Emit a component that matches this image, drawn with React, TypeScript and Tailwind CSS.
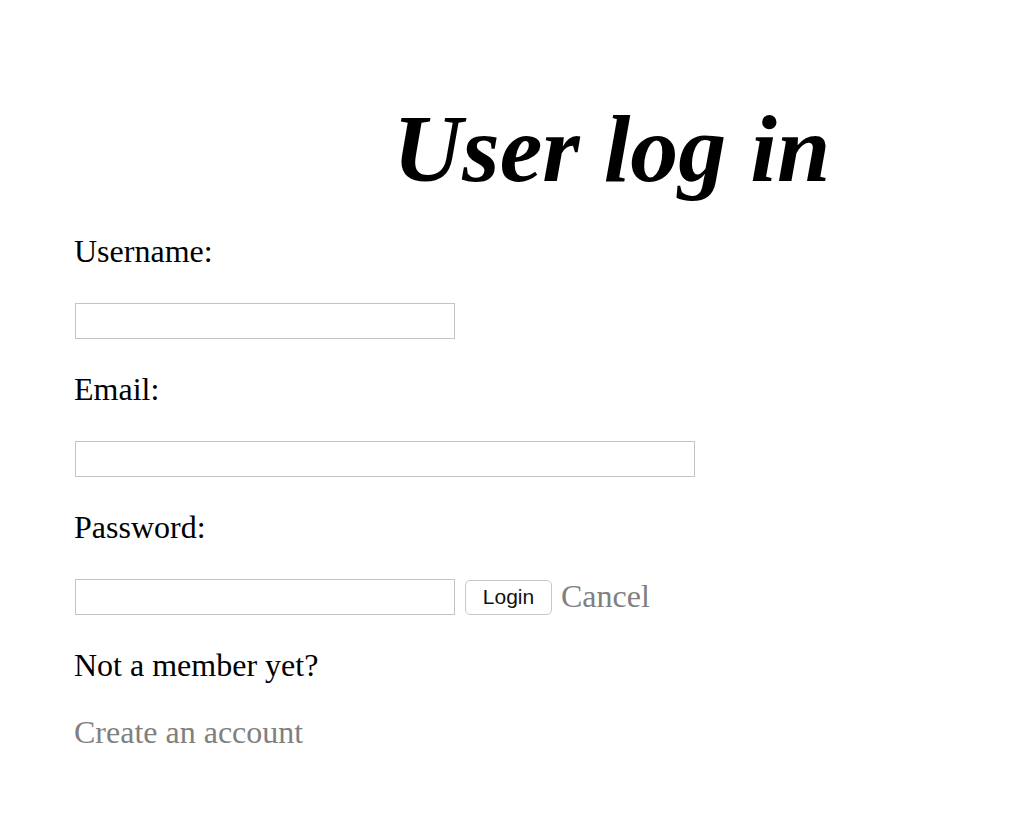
export default function App() {
  return (
    <div className="min-h-[826px] w-full bg-white pl-[74px] font-['Liberation_Serif',serif] text-black">
      <h1 className="pt-[94px] pl-[319px] text-[96px] leading-[110px] font-bold italic">User log in</h1>

      <form className="mt-[27px]" onSubmit={(e) => e.preventDefault()}>
        <label className="block text-[32px] leading-[40px]">Username:</label>
        <input type="text" className="mt-[32px] ml-px block h-[36px] w-[380px] border border-[#c4c4c4] bg-white" />

        <label className="mt-[30px] block text-[32px] leading-[40px]">Email:</label>
        <input type="email" className="mt-[32px] ml-px block h-[36px] w-[620px] border border-[#c4c4c4] bg-white" />

        <label className="mt-[30px] block text-[32px] leading-[40px]">Password:</label>
        <div className="mt-[32px] flex h-[36px] items-center">
          <input type="password" className="ml-px h-[36px] w-[380px] border border-[#c4c4c4] bg-white" />
          <button
            type="submit"
            className="ml-[10px] h-[35px] w-[87px] rounded-[5px] border border-[#c8c8c8] bg-white font-['Liberation_Sans',sans-serif] text-[21px] text-[#111]"
          >
            Login
          </button>
          <a href="#" className="ml-[9px] -mt-[3px] text-[32px] leading-[36px] text-[#808080]">Cancel</a>
        </div>

        <p className="mt-[30px] text-[32px] leading-[40px]">Not a member yet?</p>
        <a href="#" className="mt-[27px] block w-fit text-[32px] leading-[40px] text-[#808080]">Create an account</a>
      </form>
    </div>
  );
}
